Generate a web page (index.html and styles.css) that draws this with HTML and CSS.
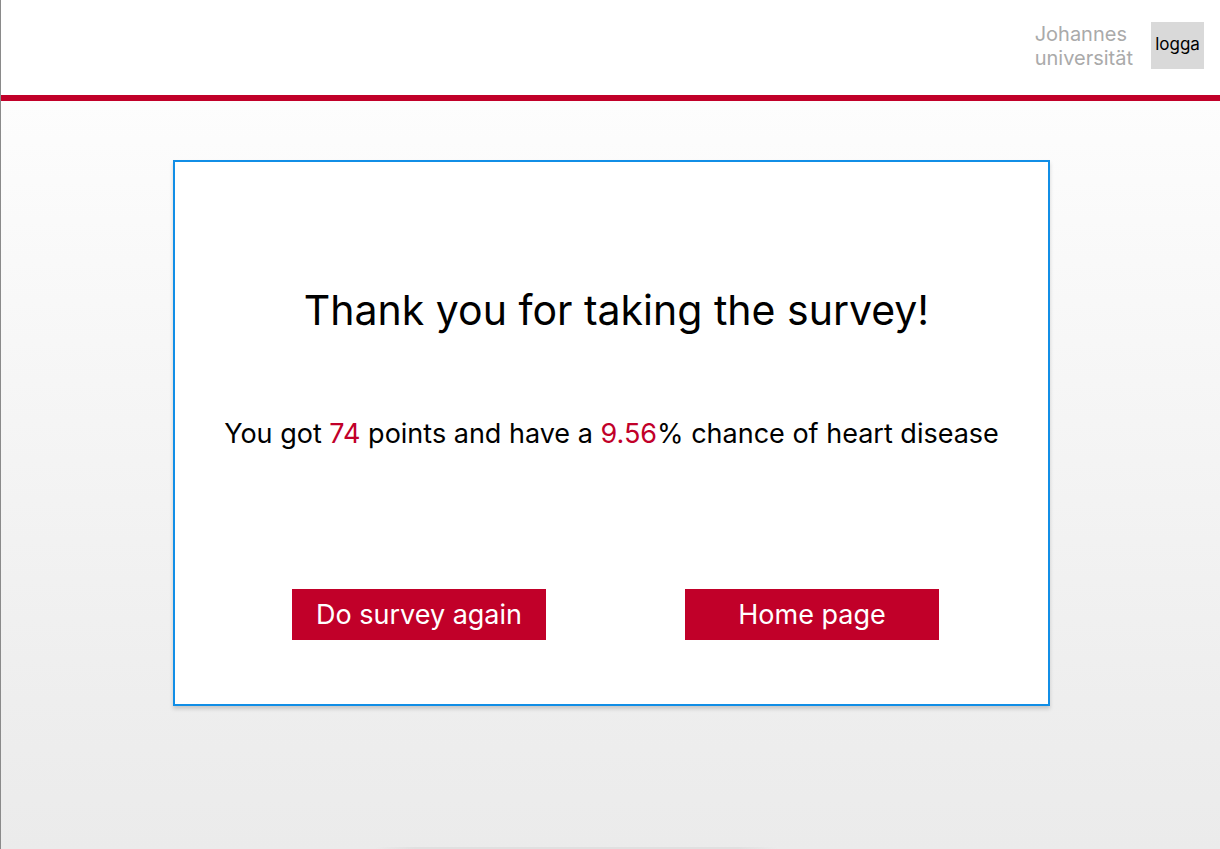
FILE: index.html
```html
<!DOCTYPE html>
<html lang="en">
<head>
<meta charset="utf-8">
<meta name="viewport" content="width=device-width, initial-scale=1">
<title>Survey result</title>
<link rel="stylesheet" href="styles.css">
</head>
<body class="page">
  <header class="header">
    <p class="brand">Johannes<br>universität</p>
    <div class="logo">logga</div>
  </header>
  <main class="main">
    <section class="card">
      <h1 class="title">Thank you for taking the survey!</h1>
      <p class="result">You got <span class="value">74</span> points and have a <span class="value">9.56</span>% chance of heart disease</p>
      <div class="actions">
        <button class="button" type="button">Do survey again</button>
        <button class="button" type="button">Home page</button>
      </div>
    </section>
    <div class="edge"></div>
  </main>
</body>
</html>
```

FILE: styles.css
```css
* {
  box-sizing: border-box;
}

.page {
  display: flex;
  flex-direction: column;
  min-height: 100vh;
  margin: 0;
  border-left: 1px solid #8a8a8a;
  font-family: Inter, "Liberation Sans", sans-serif;
  color: #000;
}

.header {
  display: flex;
  justify-content: flex-end;
  align-items: flex-start;
  gap: 18px;
  padding: 22px 16px 25px;
  background: #fff;
  border-bottom: 6px solid #c10029;
}

.brand {
  margin: 0;
  font-size: 20px;
  line-height: 24px;
  color: #aaa;
}

.logo {
  display: grid;
  place-items: center;
  width: 53px;
  height: 47px;
  padding-bottom: 3px;
  background: #d9d9d9;
  font-size: 17px;
}

.main {
  display: flex;
  flex: 1;
  flex-direction: column;
  padding: 59px 170px 0 172px;
  background: linear-gradient(#fdfdfd, #eeeeee 80%, #ebebeb);
}

.card {
  padding: 123px 48px 64px;
  background: #fff;
  border: 2px solid #118ee6;
  box-shadow: 0 3px 4px rgba(0, 0, 0, 0.16);
  text-align: center;
}

.title {
  margin: 0 0 82px;
  padding-left: 10px;
  font-size: 41px;
  font-weight: 400;
  line-height: 50px;
}

.result {
  margin: 0 0 138px;
  font-size: 27px;
  line-height: 34px;
}

.value {
  color: #c10029;
}

.actions {
  display: flex;
  justify-content: center;
  gap: 139px;
  padding-left: 8px;
}

.button {
  width: 254px;
  height: 51px;
  padding: 0;
  border: 0;
  background: #c10029;
  color: #fff;
  font: inherit;
  font-size: 27px;
  line-height: 34px;
}

.edge {
  width: 46%;
  height: 2px;
  margin: auto auto 0 23%;
  background: linear-gradient(90deg, transparent, #e0e0e0 10%, #e0e0e0 90%, transparent);
}
```
